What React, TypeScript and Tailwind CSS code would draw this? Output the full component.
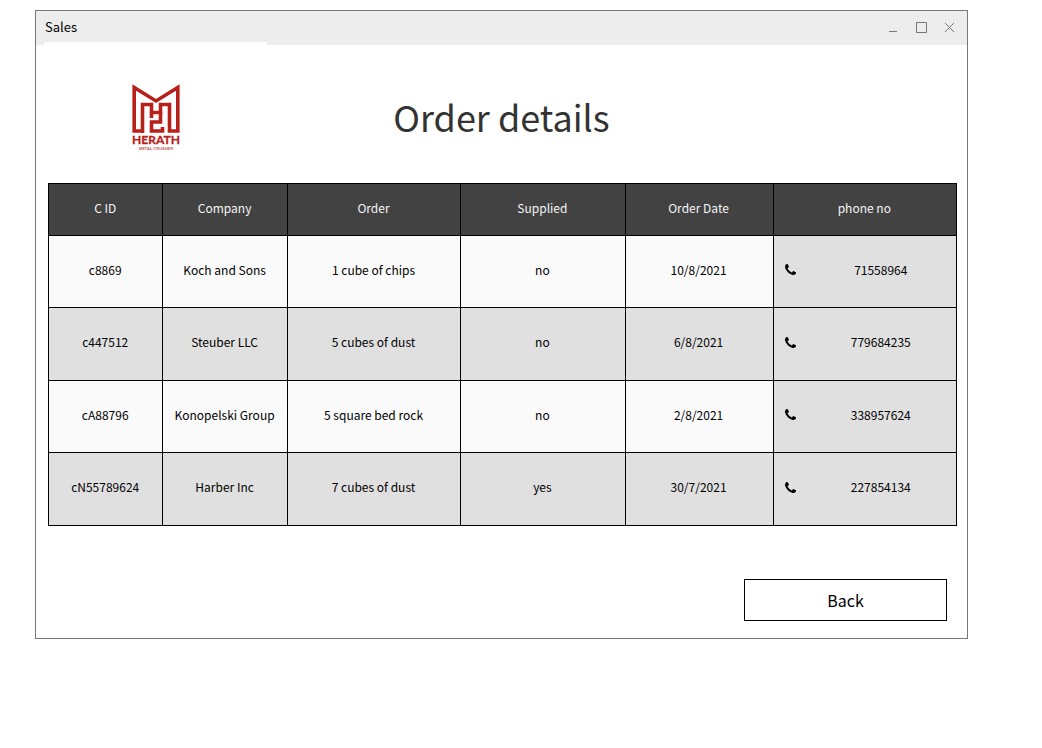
import React from 'react';

const columns = ['C ID', 'Company', 'Order', 'Supplied', 'Order Date', 'phone no'];

const orders = [
  ['c8869', 'Koch and Sons', '1 cube of chips', 'no', '10/8/2021', '71558964'],
  ['c447512', 'Steuber LLC', '5 cubes of dust', 'no', '6/8/2021', '779684235'],
  ['cA88796', 'Konopelski Group', '5 square bed rock', 'no', '2/8/2021', '338957624'],
  ['cN55789624', 'Harber Inc', '7 cubes of dust', 'yes', '30/7/2021', '227854134'],
];

function Logo() {
  return (
    <svg viewBox="0 0 50 68" className="h-[68px] w-[50px]" role="img" aria-label="Herath Metal Crusher">
      <g fill="none" stroke="#b8211b" strokeWidth="3.6">
        <path d="M11.500 49V20.500H20.500V28.500H29.500V20.500H38.500V47H46.800V3.500L25 17L3.200 3.500V47H11.500" />
        <path d="M20.500 28.500V34M29.500 28.500V38H20.500V47H31.500V43" />
      </g>
      <text x="25" y="60" textAnchor="middle" fontSize="12" fontWeight="700" fill="#b8211b" stroke="#b8211b" strokeWidth="0.3" fontFamily="Lato, sans-serif">HERATH</text>
      <text x="25" y="66" textAnchor="middle" fontSize="4" fontWeight="700" fill="#c4605c" fontFamily="Liberation Sans, sans-serif">METAL CRUSHER</text>
    </svg>
  );
}

function PhoneIcon() {
  return (
    <svg viewBox="0 0 1408 1408" className="size-[11px] shrink-0" aria-hidden="true">
      <path d="M1408 1112q0 27-10 70.500t-21 68.500q-21 50-122 106-94 51-186 51-27 0-53-3.500t-57.500-12.500-47-14.500-55.500-20.500-49-18q-98-35-175-83-127-79-264-216t-216-264q-48-77-83-175-3-9-18-49t-20.500-55.500-14.500-47-12.500-57.500-3.500-53q0-92 51-186 56-101 106-122 25-11 68.500-21t70.500-10q14 0 21 3 18 6 53 76 11 19 30 54t35 63.500 31 53.500q3 4 17.500 25t21.500 35.500 7 28.500q0 20-28.500 50t-62 55-62 53-28.500 46q0 9 5 22.500t8.500 20.500 14 24 11.500 19q76 137 174 235t235 174q2 1 19 11.500t24 14 20.500 8.500 22.500 5q18 0 46-28.500t53-62 55-62 50-28.500q14 0 28.500 7t35.500 21.500 25 17.500q25 15 53.500 31t63.500 35 54 30q70 35 76 53 3 7 3 21z" />
    </svg>
  );
}

export default function App() {
  return (
    <div className="bg-white pt-[10px] pr-[74px] pb-10 pl-[35px] font-['Noto_Sans_CJK_SC',sans-serif] text-black">
      <section className="border border-[#777777] bg-white">
        <div className="bg-[#ededed]">
          <div className="flex h-[31px] items-center justify-between pr-3 pl-[9px]">
            <span className="text-[13px] leading-5">Sales</span>
            <div className="flex gap-4 text-[#777777]">
              <button type="button" aria-label="Minimize">
                <svg viewBox="0 0 12 12" className="size-3" fill="none" stroke="currentColor"><path d="M2 10.500h8" /></svg>
              </button>
              <button type="button" aria-label="Maximize">
                <svg viewBox="0 0 12 12" className="size-3" fill="none" stroke="currentColor"><path d="M1.500 1.500h10v10h-10z" /></svg>
              </button>
              <button type="button" aria-label="Close">
                <svg viewBox="0 0 12 12" className="size-3" fill="none" stroke="currentColor"><path d="M2 2l9 9M11 2l-9 9" /></svg>
              </button>
            </div>
          </div>
          <div className="ml-2 h-[3px] w-[223px] bg-white" />
        </div>

        <header className="grid h-[138px] grid-cols-[1fr_auto_1fr] items-center pt-1">
          <div className="pt-1 pl-[95px]"><Logo /></div>
          <h1 className="text-4xl text-[#333333]">Order details</h1>
        </header>

        <div className="pr-[10px] pl-3">
          <table className="w-full table-fixed border-collapse text-center text-xs">
            <colgroup>
              <col className="w-[12.6%]" />
              <col className="w-[13.7%]" />
              <col className="w-[19.1%]" />
              <col className="w-[18.1%]" />
              <col className="w-[16.3%]" />
              <col className="w-[20.2%]" />
            </colgroup>
            <thead>
              <tr className="h-[52px] bg-[#424242] text-[#f5f5f5]">
                {columns.map((name) => (
                  <th key={name} scope="col" className="border border-black pt-0 pr-px pb-1 pl-0 font-normal">{name}</th>
                ))}
              </tr>
            </thead>
            <tbody>
              {orders.map((row) => (
                <tr key={row[0]} className="h-[72px] bg-[#fafafa] even:h-[73px] even:bg-[#e0e0e0]">
                  {row.slice(0, 5).map((value, i) => (
                    <td key={i} className="border border-black pt-0 pr-px pb-1 pl-0">{value}</td>
                  ))}
                  <td className="border border-black bg-[#e0e0e0] pt-0 pr-0 pb-1 pl-[11px]">
                    <div className="flex items-center">
                      <PhoneIcon />
                      <span className="ml-[10px] flex-1">{row[5]}</span>
                    </div>
                  </td>
                </tr>
              ))}
            </tbody>
          </table>
        </div>

        <div className="flex justify-end pt-[53px] pr-5 pb-[17px]">
          <button type="button" className="h-[42px] w-[203px] border border-black bg-white text-base">Back</button>
        </div>
      </section>
    </div>
  );
}
